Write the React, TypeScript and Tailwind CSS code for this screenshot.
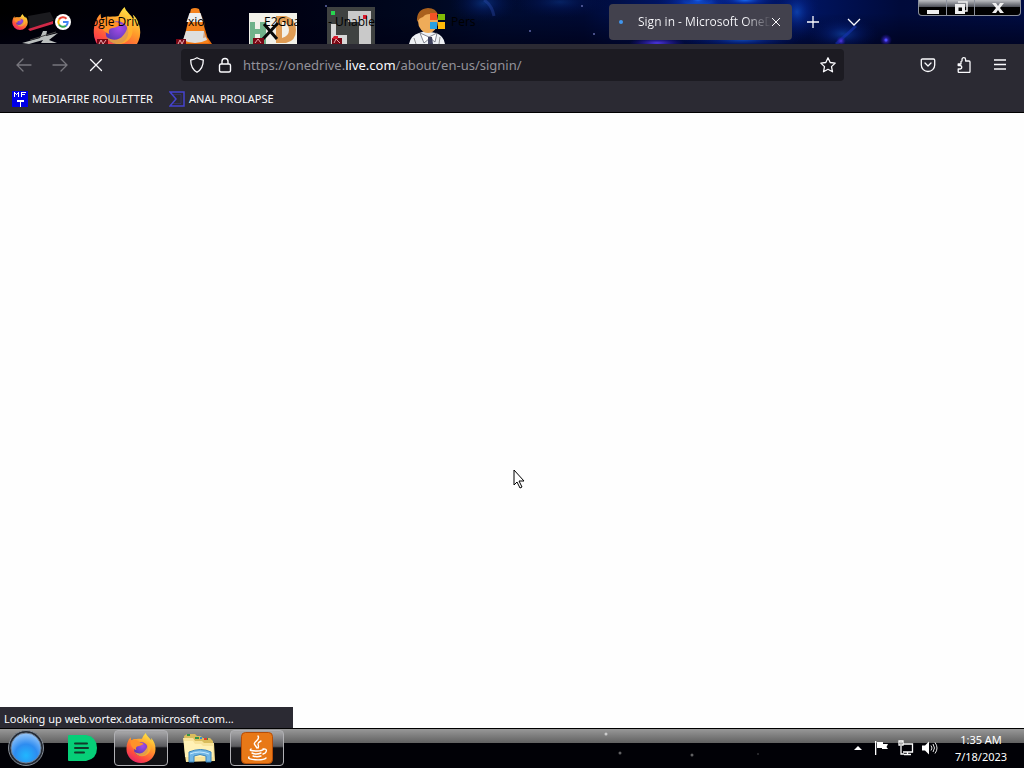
import React from "react";

function FirefoxLogo({ className }: { className: string }) {
  return (
    <svg viewBox="0 0 32 32" className={className} aria-hidden="true">
      <defs>
        <linearGradient id="fxBody" x1="0.8" y1="0" x2="0.25" y2="1">
          <stop offset="0" stopColor="#fff04a" />
          <stop offset="0.4" stopColor="#ff9a2a" />
          <stop offset="0.75" stopColor="#ff4b40" />
          <stop offset="1" stopColor="#e3206c" />
        </linearGradient>
        <radialGradient id="fxCore" cx="0.6" cy="0.3" r="0.8">
          <stop offset="0" stopColor="#a44be8" />
          <stop offset="1" stopColor="#4a35a8" />
        </radialGradient>
      </defs>
      <path d="M21 0c1 3 4 5 6 8 0-1 0-2-.5-3 3.500 3 5 8 5 12A15.500 15 0 0 1 .5 17C.5 12 2 7.500 5 4.500L5.500 8C7 6.500 9 6 11 6.500c3-.5 5 0 6-.5 1-2 2-4 4-6z" fill="url(#fxBody)" />
      <circle cx="16" cy="17" r="7.500" fill="url(#fxCore)" />
      <path d="M5 8c4-2 8 0 10 2 2 0 3 1 4 2-2 0-3 2-6 2-2 0-3 2-2 4-4-1-7-5-6-10z" fill="#ff9228" />
      <path d="M24 9c4 5 3 12-3 15-5 2-10 0-12-4 4 3 9 2 11-1 3-3 3-6 4-10z" fill="#ffb52d" opacity="0.8" />
    </svg>
  );
}

function Wallpaper() {
  return (
    <svg viewBox="0 0 1024 44" preserveAspectRatio="none" className="absolute inset-0 h-full w-full" aria-hidden="true">
      <defs>
        <linearGradient id="sky">
          <stop offset="0" stopColor="#000" />
          <stop offset="0.1" stopColor="#000008" />
          <stop offset="0.25" stopColor="#000010" />
          <stop offset="0.42" stopColor="#000820" />
          <stop offset="0.48" stopColor="#000c30" />
          <stop offset="0.57" stopColor="#000a34" />
          <stop offset="0.68" stopColor="#001a78" />
          <stop offset="0.79" stopColor="#00145e" />
          <stop offset="0.88" stopColor="#000a3a" />
          <stop offset="1" stopColor="#000c42" />
        </linearGradient>
        <linearGradient id="dim" x2="0" y2="1">
          <stop offset="0.3" stopColor="#000014" stopOpacity="0" />
          <stop offset="1" stopColor="#000014" stopOpacity="0.6" />
        </linearGradient>
        <radialGradient id="glow">
          <stop offset="0" stopColor="#1868f0" />
          <stop offset="0.4" stopColor="#0b35b0" stopOpacity="0.6" />
          <stop offset="1" stopColor="#001060" stopOpacity="0" />
        </radialGradient>
        <radialGradient id="violet">
          <stop offset="0" stopColor="#5038e0" />
          <stop offset="1" stopColor="#2010a0" stopOpacity="0" />
        </radialGradient>
      </defs>
      <rect width="1024" height="44" fill="url(#sky)" />
      <ellipse cx="484" cy="3" rx="34" ry="20" fill="url(#glow)" opacity="0.35" />
      <ellipse cx="560" cy="2" rx="50" ry="16" fill="url(#glow)" opacity="0.25" />
      <rect width="1024" height="44" fill="url(#dim)" />
      <path d="M484 0q8 5 10 16" stroke="#3858c8" strokeWidth="3" fill="none" opacity="0.3" />
      <ellipse cx="698" cy="2" rx="44" ry="14" fill="url(#glow)" />
      <ellipse cx="698" cy="0" rx="14" ry="5" fill="url(#glow)" />
      <ellipse cx="745" cy="0" rx="34" ry="9" fill="url(#glow)" />
      <ellipse cx="657" cy="43" rx="28" ry="6" fill="url(#violet)" />
      <ellipse cx="742" cy="39" rx="60" ry="12" fill="url(#glow)" opacity="0.7" />
      <ellipse cx="797" cy="12" rx="24" ry="30" fill="url(#glow)" opacity="0.5" />
      <ellipse cx="843" cy="34" rx="36" ry="18" fill="url(#glow)" opacity="0.45" />
      <path d="M836 44q10-9 20-18" stroke="#1738c0" strokeWidth="3" fill="none" opacity="0.5" />
      <circle cx="841" cy="41" r="5" fill="url(#violet)" />
      <circle cx="886" cy="40" r="6" fill="url(#violet)" />
      <circle cx="886" cy="40" r="1.500" fill="#4b4bff" />
      <g fill="#6068a8">
        <circle cx="530" cy="31" r="1" />
        <circle cx="594" cy="34" r="1" />
        <circle cx="582" cy="6" r="1" />
        <circle cx="326" cy="6" r="1" />
      </g>
    </svg>
  );
}

function DesktopIcons() {
  return (
    <div className="absolute inset-0 overflow-hidden">
      <svg viewBox="0 0 460 44" className="absolute left-0 top-0 h-11 w-[460px]" aria-hidden="true">
        {/* Pocket knife */}
        <path d="M28 16l22-4 4 8-24 10z" fill="#1b1b1f" />
        <path d="M28 29l25-8v3l-23 7z" fill="#cf2947" />
        <path d="M22 43l18-5 3-7 4 0-1 5 12-3-9 7 8 3H41l2-3-14 4z" fill="#b9bdbd" />
        <path d="M30 40l26-8" stroke="#444" strokeWidth="1" />
        {/* Traffic cone */}
        <path d="M181 44l3-6 6-2h10l8 2 4 6z" fill="#e96b0c" />
        <path d="M191 9q4-2 8 0l10 34h-26z" fill="#f5821c" />
        <path d="M189.500 13h11l3 9h-17z" fill="#eee" />
        <path d="M186 31h18l3 9q-12 6-24 0z" fill="#dedede" />
        <path d="M201 13l4 11-2 14 4-1z" fill="#c85400" opacity="0.4" />
        {/* Hex editor tile */}
        <rect x="249" y="13" width="48" height="31" fill="#f2f1e9" />
        <path d="M250 22h5v7h5v-7h6v22h-6V34h-5v10h-5z" fill="#70b28a" />
        <path fillRule="evenodd" d="M276 16h10q10 3 10 14t-10 13h-10zM282 21v17q7-2 7-8t-7-9z" fill="#df9c54" />
        <path d="M264 24l13 15M278 23l-15 16" stroke="#080808" strokeWidth="3" />
        {/* Map tile */}
        <rect x="327" y="7" width="48" height="37" fill="#3f4241" />
        <path d="M348 11h23v33h-12V22h-11z" fill="#c9c9c9" />
        <path d="M331 24h5v11h11v9h-16z" fill="#d7d7d7" />
        <rect x="331" y="11" width="4" height="4" fill="#28d650" />
        <rect x="363" y="15" width="4" height="4" fill="#d41a2c" />
        {/* Lab assistant */}
        <path d="M409 44q2-9 10-11l6-2 11 2q8 3 9 11z" fill="#edf0f4" />
        <ellipse cx="428" cy="21" rx="10" ry="12" fill="#efac59" />
        <path d="M417 22q-1-13 11-14 8 0 10 7-12-3-15 2-4 1-6 5z" fill="#a9601d" />
        <path d="M420 33l9 4 8-4-2 9-5-4-6 5z" fill="#fff" stroke="#686b78" strokeWidth="0.800" />
        <path d="M428 37h4l1 7h-5z" fill="#40435f" />
        <path d="M414 38l2 6M440 37l-1 7" stroke="#777" strokeWidth="0.800" />
        <rect x="430" y="13" width="7" height="7" fill="#f35325" />
        <rect x="438" y="14" width="7" height="6" fill="#81bc06" />
        <rect x="430" y="22" width="7" height="7" fill="#28a0df" />
        <rect x="438" y="22" width="7" height="7" fill="#ffba08" />
      </svg>
      <FirefoxLogo className="absolute left-[93px] top-[7px] h-12 w-12" />
      <svg viewBox="0 0 460 44" className="absolute left-0 top-0 h-11 w-[460px]" aria-hidden="true">
        <g fill="#780714">
          <rect x="97" y="39" width="11" height="5" />
          <rect x="176" y="39" width="10" height="5" />
          <rect x="253" y="38" width="11" height="6" />
          <rect x="332" y="38" width="10" height="6" />
        </g>
        <path d="M99 44l2-4 2 4 3-4M178 44l2-4 2 4 2-4M255 43l3-4 3 4M334 43l2-4 4 4" stroke="#e9a8ad" strokeWidth="1" fill="none" />
        <path d="M332 39h6v-3h-4z" fill="#d41a2c" />
      </svg>
    </div>
  );
}

function GoogleLogo() {
  return (
    <svg viewBox="0 0 16 16" className="h-4 w-4" aria-hidden="true">
      <circle cx="8" cy="8" r="8" fill="#fff" />
      <g fill="none" strokeWidth="2">
        <path d="M4 5.500A4.700 4.700 0 0 1 11.500 4.700" stroke="#ea4335" />
        <path d="M4 5.500a5 5 0 0 0 0 5" stroke="#fbbc05" />
        <path d="M4 10.500a4.700 4.700 0 0 0 7 1.300" stroke="#34a853" />
        <path d="M11 12q2-2 1.700-4H8" stroke="#4285f4" />
      </g>
    </svg>
  );
}

function TabStrip() {
  return (
    <header className="relative h-11 shrink-0 overflow-hidden bg-black">
      <Wallpaper />
      <DesktopIcons />
      <div className="relative flex h-11 items-center text-xs text-black">
        <button className="ml-3 w-[43px]" aria-label="Firefox View">
          <FirefoxLogo className="h-4 w-4" />
        </button>
        <button className="flex w-[133px] items-center gap-5">
          <GoogleLogo />
          <span>ogle Driv</span>
        </button>
        <button className="w-[76px] text-left">xio</button>
        <button className="w-16 text-left">E2Gua</button>
        <button className="w-[123px] text-left">- Unable</button>
        <button className="w-[158px] text-left">Pers</button>
        <div className="flex h-9 w-[183px] shrink-0 items-center rounded bg-[#42414d] text-[#fbfbfe]">
          <span className="ml-2.5 h-1 w-1 rounded-full bg-[#4096ef]" />
          <button className="ml-[15px] w-[133px] whitespace-nowrap bg-linear-to-r from-[#fbfbfe] from-80% to-[#42414d] bg-clip-text text-left text-transparent">
            Sign in - Microsoft OneD
          </button>
          <button aria-label="Close tab">
            <svg viewBox="0 0 10 10" className="h-2.5 w-2.5" fill="none" stroke="currentColor">
              <path d="M1 1l8 8M9 1l-8 8" />
            </svg>
          </button>
        </div>
        <button aria-label="New tab" className="ml-[15px]">
          <svg viewBox="0 0 12 12" className="h-3 w-3" fill="none" stroke="#fbfbfe">
            <path d="M6 0v12M0 6h12" strokeWidth="1.300" />
          </svg>
        </button>
        <button aria-label="List all tabs" className="ml-7">
          <svg viewBox="0 0 14 8" className="h-2 w-3.5" fill="none" stroke="#fbfbfe">
            <path d="M1 1l6 6 6-6" strokeWidth="1.300" />
          </svg>
        </button>
        <div className="ml-auto mr-[3px] flex h-4 w-[103px] self-start overflow-hidden rounded-b border border-t-0 border-[#8c919c] bg-linear-to-b from-[#b4b6ba] from-5% via-[#50535b] via-45% to-black to-50%">
          <button aria-label="Minimize" className="flex w-7 items-end justify-center border-r border-[#8c919c] pb-px">
            <span className="h-1 w-3 bg-[#eee]" />
          </button>
          <button aria-label="Restore" className="flex w-7 items-center justify-center border-r border-[#8c919c]">
            <svg viewBox="0 0 14 13" className="h-[13px] w-3.5">
              <path d="M4 1h9v9h-2" fill="none" stroke="#eee" strokeWidth="1.500" />
              <path fillRule="evenodd" d="M1 3h10v10H1zM4.500 6.500v3.500h3.500V6.500z" fill="#eee" />
            </svg>
          </button>
          <button aria-label="Close" className="flex flex-1 items-center justify-center">
            <svg viewBox="0 0 12 10" className="h-2.5 w-3">
              <path d="M0 0h4l2 3 2-3h4L8 5l4 5H8L6 7l-2 3H0l4-5z" fill="#eee" />
            </svg>
          </button>
        </div>
      </div>
    </header>
  );
}

function Toolbar() {
  return (
    <nav className="flex h-[42px] shrink-0 items-center bg-[#2b2a33] px-4 text-[#fbfbfe]">
      <button aria-label="Back" className="text-[#77767d]">
        <svg viewBox="0 0 16 16" className="h-4 w-4" fill="none" stroke="currentColor" strokeWidth="1.300" strokeLinecap="round">
          <path d="M15 8H1M7 2L1 8l6 6" />
        </svg>
      </button>
      <button aria-label="Forward" className="ml-5 text-[#77767d]">
        <svg viewBox="0 0 16 16" className="h-4 w-4" fill="none" stroke="currentColor" strokeWidth="1.300" strokeLinecap="round">
          <path d="M1 8h14M9 2l6 6-6 6" />
        </svg>
      </button>
      <button aria-label="Stop" className="ml-5">
        <svg viewBox="0 0 16 16" className="h-4 w-4" fill="none" stroke="currentColor" strokeWidth="1.300" strokeLinecap="round">
          <path d="M2.500 2.500l11 11M13.500 2.500l-11 11" />
        </svg>
      </button>
      <div className="ml-[77px] flex h-8 max-w-[663px] flex-1 items-center rounded bg-[#1c1b22] px-2">
        <svg viewBox="0 0 16 16" className="h-4 w-4" fill="none" stroke="currentColor" strokeWidth="1.300" strokeLinejoin="round">
          <path d="M8 .8c2 1.300 4 2 6.300 2.200 0 6-1.500 9.500-6.300 12.300C3.200 12.500 1.700 9 1.700 3 4 2.800 6 2.100 8 .8z" />
        </svg>
        <svg viewBox="0 0 16 16" className="ml-3 h-4 w-4" fill="none" stroke="currentColor" strokeWidth="1.400" strokeLinejoin="round">
          <rect x="2.500" y="7" width="11" height="8" rx="1.500" />
          <path d="M5 7V4.500a3 3 0 0 1 6 0V7" />
        </svg>
        <div className="relative ml-2.5 flex-1 font-['Noto_Sans','Open_Sans',sans-serif] text-[13px] leading-5">
          <input
            aria-label="Address"
            readOnly
            defaultValue="https://onedrive.live.com/about/en-us/signin/"
            className="block w-full bg-transparent text-transparent outline-none"
          />
          <span aria-hidden="true" className="pointer-events-none absolute inset-0 whitespace-nowrap text-[#93929a]">
            https://onedrive.<span className="text-[#fbfbfe]">live.com</span>/about/en-us/signin/
          </span>
        </div>
        <button aria-label="Bookmark this page">
          <svg viewBox="0 0 16 16" className="h-4 w-4" fill="none" stroke="currentColor" strokeWidth="1.300" strokeLinejoin="round">
            <path d="M8 .8l2.200 4.700 5 .6-3.700 3.500 1 5.200L8 12.300l-4.500 2.500 1-5.200L.8 6.100l5-.6z" />
          </svg>
        </button>
      </div>
      <button aria-label="Save to Pocket" className="ml-auto">
        <svg viewBox="0 0 16 16" className="h-4 w-4" fill="none" stroke="currentColor" strokeWidth="1.300" strokeLinecap="round" strokeLinejoin="round">
          <path d="M2.500 2h11q1.200 0 1.200 1.200V8a6.700 6.500 0 0 1-13.400 0V3.200Q1.300 2 2.500 2zM5 6l3 3 3-3" />
        </svg>
      </button>
      <button aria-label="Extensions" className="ml-5">
        <svg viewBox="0 0 16 16" className="h-4 w-4" fill="none" stroke="currentColor" strokeWidth="1.300" strokeLinejoin="round">
          <path d="M6 4V2.500a1.800 1.800 0 0 1 3.600 0V4H13q1 0 1 1v9.500q0 1-1 1H3.200q-1 0-1-1V12H4a1.700 1.700 0 0 0 0-3.500H2.200V7H5V4.500z" />
        </svg>
      </button>
      <button aria-label="Open application menu" className="ml-5">
        <svg viewBox="0 0 16 16" className="h-4 w-4" stroke="currentColor" strokeWidth="1.300">
          <path d="M2 3h12M2 7.500h12M2 12h12" />
        </svg>
      </button>
    </nav>
  );
}

function BookmarksBar() {
  return (
    <div className="flex h-[27px] shrink-0 items-center gap-4 border-b border-black bg-[#2b2a33] px-3 font-['Noto_Sans','Open_Sans',sans-serif] text-[11px] text-[#fbfbfe]">
      <a href="#mediafire" className="flex items-center gap-1">
        <svg viewBox="0 0 16 16" className="h-4 w-4" shapeRendering="crispEdges" aria-hidden="true">
          <rect width="16" height="16" fill="#0000e8" />
          <path d="M2 1h1v1h1v1h1V2h1V1h1v5H6V3H5v1H4V3H3v3H2zM9 1h5v1h-4v1h3v1h-3v2H9zM5 9h7v2H9v5H8v-5H5z" fill="#fff" />
        </svg>
        MEDIAFIRE ROULETTER
      </a>
      <a href="#prolapse" className="flex items-center gap-1">
        <svg viewBox="0 0 16 16" className="h-4 w-4" fill="none" stroke="#4543cf" strokeWidth="1.500" aria-hidden="true">
          <path d="M1 1h14v14H1l6-7z" />
          <path d="M4 3.500h8v9H4" strokeWidth="0.800" opacity="0.4" />
        </svg>
        ANAL PROLAPSE
      </a>
    </div>
  );
}

function Taskbar() {
  const active =
    "flex h-9 w-[54px] items-center justify-center rounded-sm border border-[#b0b0b4] bg-linear-to-b from-[#a2a2a4] from-5% via-[#5c5c60] via-45% to-[#111115] to-50%";
  return (
    <footer className="relative flex h-10 shrink-0 items-center border-t border-black bg-linear-to-b from-[#989898] from-0% via-[#636363] via-35% to-[#010106] to-37% pb-0.5 text-white">
      <svg className="absolute inset-0 h-full w-full" aria-hidden="true">
        <g fill="#a0a0a0">
          <circle cx="606" cy="5" r="1.500" fill="#ccc" />
          <circle cx="620" cy="24" r="1.500" opacity="0.6" />
          <circle cx="692" cy="26" r="1.500" opacity="0.6" />
          <circle cx="758" cy="25" r="1" opacity="0.3" />
        </g>
      </svg>
      <button aria-label="Start" className="relative ml-1.5">
        <svg viewBox="0 0 40 36" className="h-9 w-10">
          <defs>
            <radialGradient id="orb" cx="0.5" cy="0.75" r="0.75">
              <stop offset="0" stopColor="#20b7ff" />
              <stop offset="0.5" stopColor="#2d8cf0" />
              <stop offset="1" stopColor="#9ac8fa" />
            </radialGradient>
          </defs>
          <circle cx="20" cy="18" r="17.500" fill="#252b35" stroke="#888f98" />
          <circle cx="20" cy="18" r="15" fill="url(#orb)" stroke="#718399" />
        </svg>
      </button>
      <button aria-label="Notes" className="relative ml-[22px]">
        <svg viewBox="0 0 30 26" className="h-[26px] w-[30px]">
          <path d="M1 0h17q11 2 11 13T18 26H1q-1 0-1-1V1q0-1 1-1z" fill="#06cf78" />
          <path d="M7 8.500h12M7 13h13M7 17.500h9" stroke="#113b2b" strokeWidth="2" strokeLinecap="round" />
        </svg>
      </button>
      <button aria-label="Firefox" className={`relative ml-4 ${active}`}>
        <FirefoxLogo className="h-[30px] w-[30px]" />
      </button>
      <button aria-label="File Explorer" className="relative ml-3.5">
        <svg viewBox="0 0 34 30" className="h-[30px] w-[34px]">
          <path d="M2 3l3-2h8l2 2 4 0 2 2 7 0 3 3v20H4z" fill="#d9bc5c" />
          <path d="M1 5h10l2 3h7l2 2h10l1 18-29 1z" fill="#f8e39a" />
          <path d="M2 8h9l2 3h6l2 2h10v11H3z" fill="#fff1b5" />
          <path d="M5 2h3M13 5h4M22 6h4" stroke="#349346" strokeWidth="2" />
          <path d="M18 5h2" stroke="#3987d2" strokeWidth="2" />
          <path d="M22 6h3" stroke="#df3d2e" strokeWidth="2" />
          <path d="M7 19q12-5 22 0v10h-5v-6q-6-3-12 0v6H7z" fill="#72b7e6" stroke="#3a84bc" />
          <path d="M8 21q9-4 19 0" stroke="#c5eaff" fill="none" />
        </svg>
      </button>
      <button aria-label="Java" className={`relative ml-3.5 ${active}`}>
        <svg viewBox="0 0 32 32" className="h-8 w-8">
          <rect x="0.500" y="0.500" width="31" height="31" rx="4" fill="#e87817" stroke="#b64d08" />
          <g fill="none" stroke="#fff" strokeWidth="1.400" strokeLinecap="round">
            <path d="M17 4c3 4-6 6-3 9l2 3M20 9c-6 3-1 4-3 7" />
            <path d="M10 17q-3 2 6 2 5 0 7-2M11 21q4 2 9 0M12 24q4 1.500 8 0M22 17c5-1 4 4 0 5M8 25c-3 3 14 4 17 1" />
          </g>
        </svg>
      </button>
      <div className="relative ml-auto flex items-center">
        <button aria-label="Show hidden icons">
          <svg viewBox="0 0 8 4" className="h-1 w-2" fill="#fff">
            <path d="M0 4l4-4 4 4z" />
          </svg>
        </button>
        <svg viewBox="0 0 16 16" className="ml-3 h-4 w-4" fill="#fff" aria-hidden="true">
          <path d="M1 1h1.300v14H1zM3 2h6v2h5l-1.500 3L14 9H8V8H3z" />
        </svg>
        <svg viewBox="0 0 16 16" className="ml-2 h-4 w-4" fill="none" stroke="#fff" strokeWidth="1.300" aria-hidden="true">
          <path d="M5 4h9.500v8H5M9.500 12v2.500M6 14.500h7M3 6v8h3M1 1h4v4H1zM3 2v2" />
        </svg>
        <svg viewBox="0 0 16 16" className="ml-2 h-4 w-4" aria-hidden="true">
          <path d="M0 5.500h3l4-4v13l-4-4H0z" fill="#fff" />
          <path d="M9 5.500q2 2.500 0 5M11 4q3 4 0 8M13 2.500q4 5.500 0 11" fill="none" stroke="#fff" strokeWidth="0.900" />
        </svg>
        <time className="ml-3 mr-3 w-[62px] text-center font-['Noto_Sans','Open_Sans',sans-serif] text-[11px] leading-[17px]">
          1:35 AM
          <br />
          7/18/2023
        </time>
      </div>
    </footer>
  );
}

export default function App() {
  return (
    <div className="flex h-screen flex-col overflow-hidden bg-black font-['Open_Sans','Noto_Sans',sans-serif]">
      <TabStrip />
      <Toolbar />
      <BookmarksBar />
      <main className="relative flex flex-1 items-end bg-[#fefefe]">
        <p
          role="status"
          className="h-[21px] w-[293px] bg-[#2b2a33] pl-1 font-['Noto_Sans','Open_Sans',sans-serif] text-[11px] leading-[23px] text-[#fbfbfe]"
        >
          Looking up web.vortex.data.microsoft.com...
        </p>
        <svg viewBox="0 0 12 20" className="absolute left-[513px] top-[356px] h-5 w-3" aria-hidden="true">
          <path d="M1 1v15l3-3 3 6 2-1-3-6h5z" fill="#fff" stroke="#000" strokeWidth="1" />
        </svg>
      </main>
      <Taskbar />
    </div>
  );
}
